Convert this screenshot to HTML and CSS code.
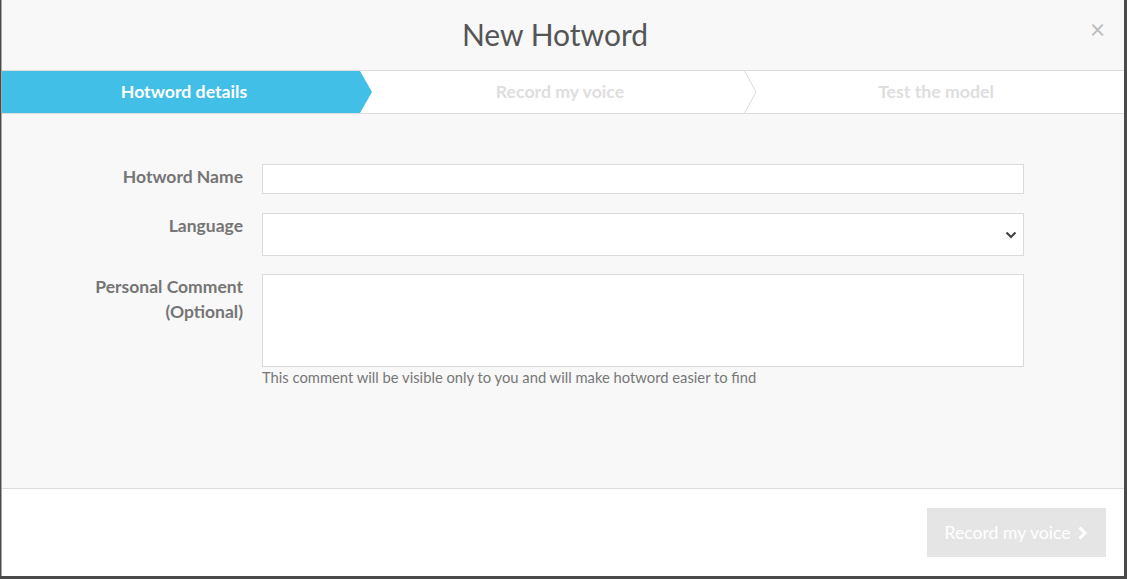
FILE: index.html
```html
<!DOCTYPE html>
<html lang="en">
<head>
  <meta charset="UTF-8">
  <title>New Hotword</title>
  <link rel="stylesheet" href="styles.css">
</head>
<body>
  <div class="modal">
    <div class="modal-header">
      <h1>New Hotword</h1>
      <span class="close">&times;</span>
    </div>

    <div class="steps">
      <div class="step active">Hotword details</div>
      <div class="step">
        Record my voice
        <svg class="step-sep" width="14" height="44" viewBox="0 0 14 44">
          <polyline points="1,0 13,22 1,44" fill="none" stroke="#dcdcdc" stroke-width="1"/>
        </svg>
      </div>
      <div class="step">Test the model</div>
    </div>

    <div class="modal-body">
      <div class="form-row">
        <label class="form-label">Hotword Name</label>
        <div class="form-field">
          <input type="text" class="input input-name">
        </div>
      </div>
      <div class="form-row">
        <label class="form-label">Language</label>
        <div class="form-field">
          <div class="select">
            <svg class="select-caret" width="12" height="8" viewBox="0 0 12 8">
              <polyline points="1.5,1.5 6,6 10.5,1.5" fill="none" stroke="#444" stroke-width="2.2"/>
            </svg>
          </div>
        </div>
      </div>
      <div class="form-row">
        <label class="form-label">Personal Comment<br>(Optional)</label>
        <div class="form-field">
          <textarea class="input input-comment"></textarea>
          <p class="help">This comment will be visible only to you and will make hotword easier to find</p>
        </div>
      </div>
    </div>

    <div class="modal-footer">
      <button class="btn-next" disabled>
        Record my voice
        <svg width="11" height="14" viewBox="0 0 11 14">
          <polyline points="2.5,1.5 8,7 2.5,12.5" fill="none" stroke="#fff" stroke-width="3"/>
        </svg>
      </button>
    </div>
  </div>
</body>
</html>
```

FILE: styles.css
```css
body {
  margin: 0;
  height: 579px;
  background-color: #4a4a4a;
  font-family: Lato, "Open Sans", sans-serif;
  overflow: hidden;
}

.modal {
  margin-left: 1px;
  width: 1122px;
  height: 576px;
  border-left: 1px solid #a8a8a8;
  background-color: #f8f8f8;
  display: flex;
  flex-direction: column;
}

.modal-header {
  position: relative;
  height: 70px;
  padding-right: 16px;
  padding-bottom: 2px;
  box-sizing: border-box;
  display: flex;
  align-items: center;
  justify-content: center;
}

.modal-header h1 {
  margin: 0;
  font-size: 30px;
  font-weight: normal;
  color: #555;
}

.close {
  position: absolute;
  right: 19px;
  top: 13px;
  font-size: 26px;
  color: #bdbdbd;
}

.steps {
  display: flex;
  height: 42px;
  border-top: 1px solid #ddd;
  border-bottom: 1px solid #ddd;
  background-color: #fff;
}

.step {
  position: relative;
  flex: 1;
  text-align: center;
  line-height: 41px;
  font-size: 17.7px;
  font-weight: bold;
  color: #dedede;
}

.step.active {
  flex: 0 0 364px;
  padding-right: 6px;
  background-color: #41bfe7;
  color: #fff;
  clip-path: polygon(0 0, 358px 0, 370px 50%, 358px 100%, 0 100%);
}

.step-sep {
  position: absolute;
  right: -9px;
  top: -1px;
}

.modal-body {
  flex: 1;
  padding-top: 50px;
}

.form-row {
  display: flex;
  margin-bottom: 19px;
}

.form-row + .form-row + .form-row {
  margin-top: -1px;
}

.form-label {
  width: 241px;
  padding-right: 19px;
  text-align: right;
  font-size: 17.5px;
  font-weight: bold;
  color: #757575;
  line-height: 25px;
}

.form-field {
  width: 762px;
}

.input,
.select {
  display: block;
  box-sizing: border-box;
  width: 762px;
  margin: 0;
  border: 1px solid #dadada;
  background-color: #fff;
  font-family: inherit;
}

.input-name {
  height: 30px;
}

.select {
  position: relative;
  height: 43px;
}

.select-caret {
  position: absolute;
  right: 6px;
  top: 17px;
}

.input-comment {
  height: 93px;
  resize: none;
}

.help {
  margin: 1px 0 0;
  font-size: 14.75px;
  color: #777;
}

.form-row:last-child {
  margin-bottom: 0;
}

.modal-footer {
  height: 87px;
  border-top: 1px solid #ddd;
  background-color: #fff;
  display: flex;
  justify-content: flex-end;
  align-items: flex-start;
  padding-right: 18px;
}

.btn-next {
  margin-top: 19px;
  width: 179px;
  height: 49px;
  border: none;
  background-color: #e5e5e5;
  color: #fff;
  font-family: inherit;
  font-size: 17.6px;
  display: flex;
  align-items: center;
  justify-content: center;
  gap: 7px;
  padding: 0;
}
```
